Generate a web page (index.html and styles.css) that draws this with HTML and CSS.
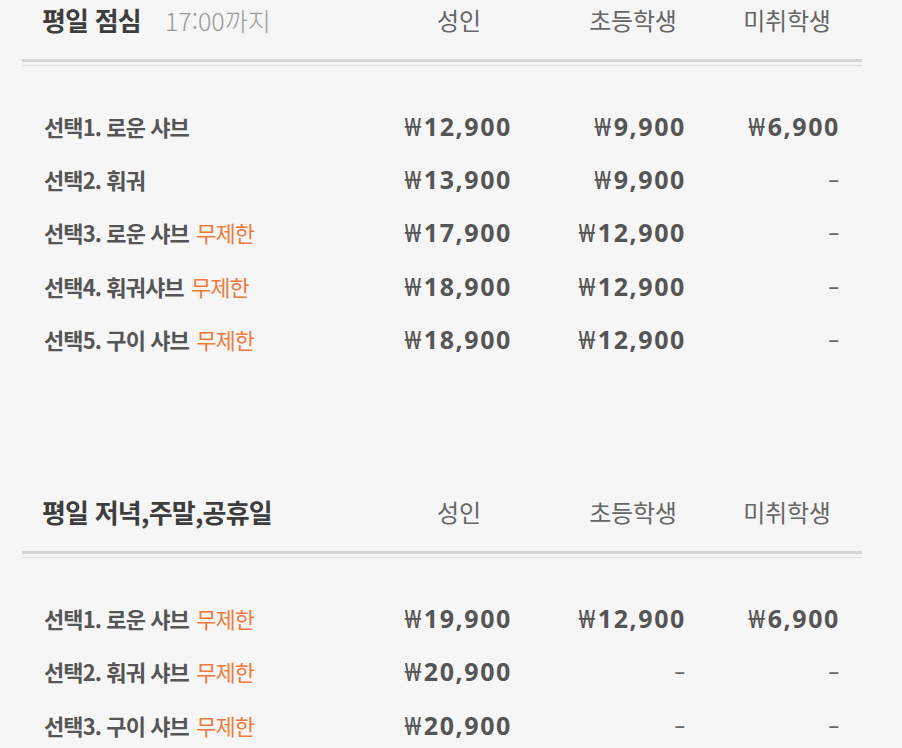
FILE: index.html
```html
<!DOCTYPE html>
<html lang="ko">
<head>
<meta charset="utf-8">
<link rel="stylesheet" href="styles.css">
</head>
<body>
<div class="wrap">
  <section class="menu">
    <div class="grid head">
      <div class="title">평일 점심<span class="until">17:00까지</span></div>
      <div class="col">성인</div>
      <div class="col">초등학생</div>
      <div class="col">미취학생</div>
    </div>
    <div class="rule"></div>
    <div class="rows">
      <div class="grid row"><div class="name">선택1. 로운 샤브</div><div class="price"><span class="won">₩</span>12,900</div><div class="price"><span class="won">₩</span>9,900</div><div class="price"><span class="won">₩</span>6,900</div></div>
      <div class="grid row"><div class="name">선택2. 훠궈</div><div class="price"><span class="won">₩</span>13,900</div><div class="price"><span class="won">₩</span>9,900</div><div class="price dash">–</div></div>
      <div class="grid row"><div class="name">선택3. 로운 샤브 <span class="tag">무제한</span></div><div class="price"><span class="won">₩</span>17,900</div><div class="price"><span class="won">₩</span>12,900</div><div class="price dash">–</div></div>
      <div class="grid row"><div class="name">선택4. 훠궈샤브 <span class="tag">무제한</span></div><div class="price"><span class="won">₩</span>18,900</div><div class="price"><span class="won">₩</span>12,900</div><div class="price dash">–</div></div>
      <div class="grid row"><div class="name">선택5. 구이 샤브 <span class="tag">무제한</span></div><div class="price"><span class="won">₩</span>18,900</div><div class="price"><span class="won">₩</span>12,900</div><div class="price dash">–</div></div>
    </div>
  </section>
  <section class="menu second">
    <div class="grid head">
      <div class="title">평일 저녁,주말,공휴일</div>
      <div class="col">성인</div>
      <div class="col">초등학생</div>
      <div class="col">미취학생</div>
    </div>
    <div class="rule"></div>
    <div class="rows">
      <div class="grid row"><div class="name">선택1. 로운 샤브 <span class="tag">무제한</span></div><div class="price"><span class="won">₩</span>19,900</div><div class="price"><span class="won">₩</span>12,900</div><div class="price"><span class="won">₩</span>6,900</div></div>
      <div class="grid row"><div class="name">선택2. 훠궈 샤브 <span class="tag">무제한</span></div><div class="price"><span class="won">₩</span>20,900</div><div class="price dash">–</div><div class="price dash">–</div></div>
      <div class="grid row"><div class="name">선택3. 구이 샤브 <span class="tag">무제한</span></div><div class="price"><span class="won">₩</span>20,900</div><div class="price dash">–</div><div class="price dash">–</div></div>
    </div>
  </section>
</div>
</body>
</html>
```

FILE: styles.css
```css
html, body {
  margin: 0;
  padding: 0;
  background: #f6f6f6;
}
body {
  font-family: "Noto Sans CJK KR", "Noto Sans", sans-serif;
  color: #555;
}
.wrap {
  margin: 0 40px 0 22px;
}
.menu.second {
  margin-top: 127px;
}
.grid {
  display: grid;
  grid-template-columns: minmax(0, 1fr) 106px 174px 154px;
  align-items: center;
  padding: 0 22px 0 20px;
}
.head {
  height: 38px;
}
.title {
  font-size: 26px;
  font-weight: 700;
  color: #3d3d3d;
  letter-spacing: -0.8px;
  white-space: nowrap;
}
.until {
  font-size: 25px;
  font-weight: 300;
  color: #999;
  letter-spacing: 0;
  margin-left: 24px;
}
.col {
  justify-self: end;
  width: 106px;
  text-align: center;
  font-size: 24px;
  font-weight: 400;
  color: #666;
  letter-spacing: -0.2px;
}
.rule {
  margin-top: 21px;
  height: 3px;
  border-top: 3px solid #d6d6d6;
  border-bottom: 1px solid #dedede;
}
.rows {
  padding-top: 33px;
}
.row {
  height: 53.3px;
}
.name {
  padding-left: 2px;
  font-size: 22px;
  font-weight: 700;
  color: #555;
  letter-spacing: -0.9px;
  white-space: nowrap;
}
.tag {
  font-weight: 400;
  color: #f07a3c;
  letter-spacing: -1px;
  margin-left: 2px;
}
.price {
  justify-self: end;
  font-family: "Noto Sans", sans-serif;
  font-size: 25px;
  font-weight: 700;
  color: #555;
  letter-spacing: 1.6px;
  white-space: nowrap;
}
.won {
  font-weight: 400;
  margin-right: 1px;
}
.dash {
  font-weight: 400;
  font-size: 21px;
  color: #666;
  letter-spacing: 0;
  margin-right: 1px;
}
```
